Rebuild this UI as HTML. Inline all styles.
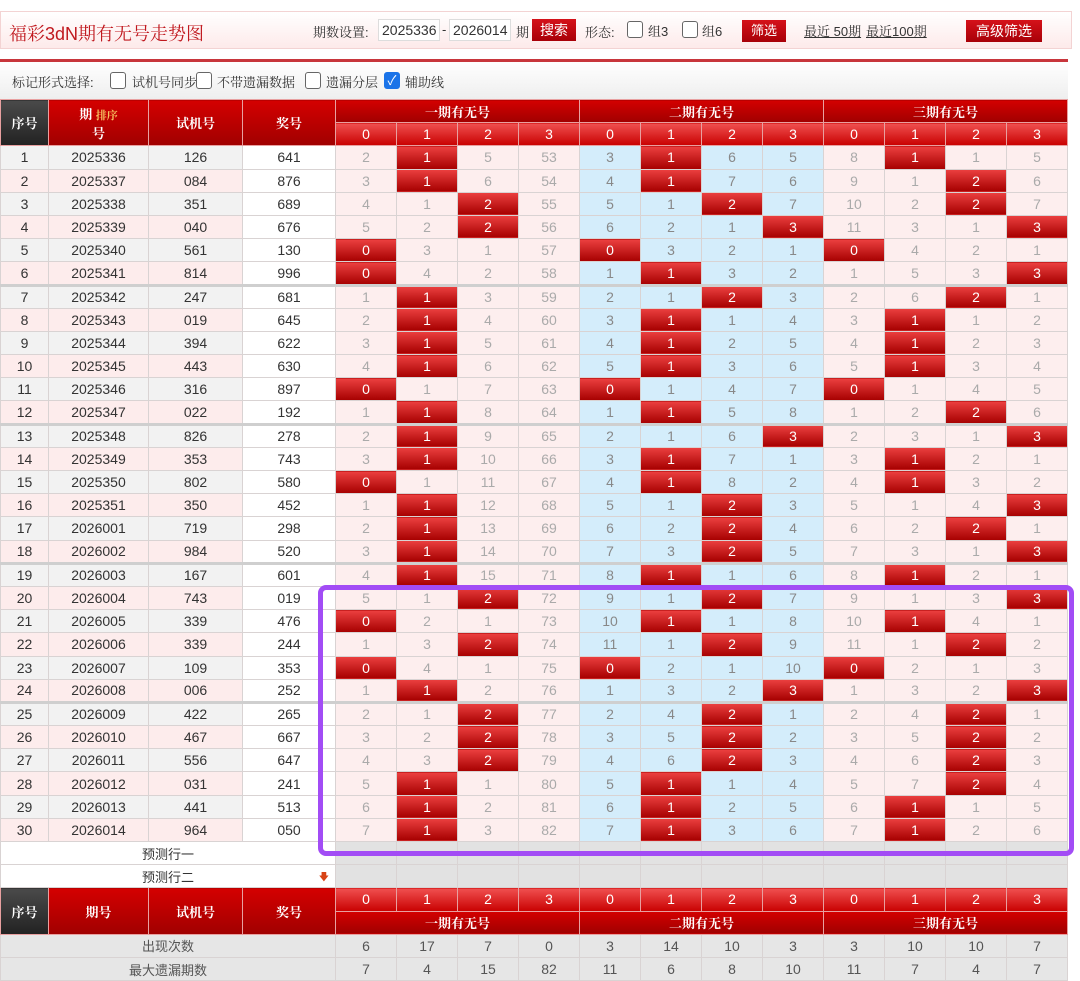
<!DOCTYPE html>
<html><head><meta charset="utf-8">
<style>
*{box-sizing:border-box;margin:0;padding:0}
body{width:1080px;height:970px;overflow:hidden;background:#fff;font-family:"Liberation Sans","Noto Sans CJK SC",sans-serif;position:relative;color:#333}
.top{position:absolute;left:0;top:11px;width:1072px;height:38px;background:linear-gradient(#fff,#fdeaea);border:1px solid #f3d3d3}
.title{position:absolute;left:8px;top:8px;font-size:18px;color:#c0181e;font-family:"Liberation Sans","Noto Serif CJK SC",serif}
.ab{position:absolute;font-size:13px;color:#333;font-family:"Liberation Sans","Noto Serif CJK SC",serif}
.inp{position:absolute;top:7px;height:22px;border:1px solid #ddd;background:#fff;font-size:14px;padding:2px 3px}
.btn{position:absolute;background:linear-gradient(#d5121a,#a80008);color:#fff;font-size:14px;text-align:center;line-height:22px;height:22px}
.cb{position:absolute;width:16px;height:17px;border:1px solid #666;border-radius:3px;background:#fff}
.redline{position:absolute;left:0;top:59px;width:1068px;height:3px;background:#c8363c}
.bar{position:absolute;left:0;top:62px;width:1068px;height:37px;background:linear-gradient(#fff,#eee)}
table{position:absolute;left:0;top:99px;border-collapse:collapse;table-layout:fixed;width:1067px;font-size:14px}
td,th{border:1px solid #d9d3d3;text-align:center;height:23.2px;padding:0;overflow:hidden;white-space:nowrap}
th{color:#fff;font-weight:bold;font-size:13px;background:linear-gradient(#d40000,#a00000);border-color:#e8a0a0;font-family:"Liberation Sans","Noto Serif CJK SC",serif}
th.dk{background:linear-gradient(#4a4a4a,#222)}
th.sub{background:linear-gradient(#f05050,#c80000);font-weight:normal;font-size:14px;font-family:"Liberation Sans",sans-serif}
tr.a td{background:#f2f2f2}
tr.b td{background:#fdecec}
tr.d td:nth-child(4){background:#fff}
tr.d td:nth-child(n+5){background:#fdeeee;color:#aaa}
tr.d td:nth-child(n+9):nth-child(-n+12){background:#d4edfb;color:#888}
tr.d td.h{background:linear-gradient(#ec4040,#a60000)!important;color:#fff!important}
tr.s td{border-top:3px solid #cfcfcf}
table tr.pr td{background:#fff;color:#333}
table tr.pr td.g{background:#e2e2e2}
table tr.ft td{background:#e6e6e6;color:#555}
.purple{position:absolute;left:318px;top:585px;width:756px;height:271px;border:5px solid #a24cf5;border-radius:8px}
</style></head><body>
<div class="top">
<div class="title">福彩3dN期有无号走势图</div>
<div class="ab" style="left:312px;top:10px">期数设置:</div>
<div class="inp" style="left:377px;width:62px">2025336</div>
<div class="ab" style="left:441px;top:10px">-</div>
<div class="inp" style="left:448px;width:62px">2026014</div>
<div class="ab" style="left:515px;top:10px">期</div>
<div class="btn" style="left:531px;top:7px;width:44px">搜索</div>
<div class="ab" style="left:584px;top:10px">形态:</div>
<div class="cb" style="left:626px;top:9px"></div><div class="ab" style="left:647px;top:9px">组3</div>
<div class="cb" style="left:681px;top:9px"></div><div class="ab" style="left:701px;top:9px">组6</div>
<div class="btn" style="left:741px;top:8px;width:44px;font-size:13px">筛选</div>
<div class="ab" style="left:803px;top:9px;text-decoration:underline">最近 50期</div>
<div class="ab" style="left:865px;top:9px;text-decoration:underline">最近100期</div>
<div class="btn" style="left:965px;top:8px;width:76px">高级筛选</div>
</div>
<div class="redline"></div>
<div class="bar">
<div class="ab" style="left:12px;top:10px">标记形式选择:</div>
<div class="cb" style="left:110px;top:10px"></div><div class="ab" style="left:132px;top:10px">试机号同步</div>
<div class="cb" style="left:196px;top:10px"></div><div class="ab" style="left:217px;top:10px">不带遗漏数据</div>
<div class="cb" style="left:305px;top:10px"></div><div class="ab" style="left:326px;top:10px">遗漏分层</div>
<div class="cb" style="left:384px;top:10px;background:#1a73e8;border-color:#1a73e8;color:#fff;font-size:13px;line-height:15px;text-align:center">✓</div><div class="ab" style="left:405px;top:10px">辅助线</div>
</div>
<table>
<colgroup><col style="width:48px"><col style="width:100px"><col style="width:94px"><col style="width:93px"><col span="12" style="width:61px"></colgroup>
<tr><th class="dk" rowspan="2">序号</th><th rowspan="2">期 <span style="color:#f6c060;font-size:11px">排序</span><br>号</th><th rowspan="2">试机号</th><th rowspan="2">奖号</th><th colspan="4">一期有无号</th><th colspan="4">二期有无号</th><th colspan="4">三期有无号</th></tr>
<tr><th class="sub">0</th><th class="sub">1</th><th class="sub">2</th><th class="sub">3</th><th class="sub">0</th><th class="sub">1</th><th class="sub">2</th><th class="sub">3</th><th class="sub">0</th><th class="sub">1</th><th class="sub">2</th><th class="sub">3</th></tr>
<tr class="d a"><td>1</td><td>2025336</td><td>126</td><td>641</td><td>2</td><td class="h">1</td><td>5</td><td>53</td><td>3</td><td class="h">1</td><td>6</td><td>5</td><td>8</td><td class="h">1</td><td>1</td><td>5</td></tr>
<tr class="d b"><td>2</td><td>2025337</td><td>084</td><td>876</td><td>3</td><td class="h">1</td><td>6</td><td>54</td><td>4</td><td class="h">1</td><td>7</td><td>6</td><td>9</td><td>1</td><td class="h">2</td><td>6</td></tr>
<tr class="d a"><td>3</td><td>2025338</td><td>351</td><td>689</td><td>4</td><td>1</td><td class="h">2</td><td>55</td><td>5</td><td>1</td><td class="h">2</td><td>7</td><td>10</td><td>2</td><td class="h">2</td><td>7</td></tr>
<tr class="d b"><td>4</td><td>2025339</td><td>040</td><td>676</td><td>5</td><td>2</td><td class="h">2</td><td>56</td><td>6</td><td>2</td><td>1</td><td class="h">3</td><td>11</td><td>3</td><td>1</td><td class="h">3</td></tr>
<tr class="d a"><td>5</td><td>2025340</td><td>561</td><td>130</td><td class="h">0</td><td>3</td><td>1</td><td>57</td><td class="h">0</td><td>3</td><td>2</td><td>1</td><td class="h">0</td><td>4</td><td>2</td><td>1</td></tr>
<tr class="d b"><td>6</td><td>2025341</td><td>814</td><td>996</td><td class="h">0</td><td>4</td><td>2</td><td>58</td><td>1</td><td class="h">1</td><td>3</td><td>2</td><td>1</td><td>5</td><td>3</td><td class="h">3</td></tr>
<tr class="d a s"><td>7</td><td>2025342</td><td>247</td><td>681</td><td>1</td><td class="h">1</td><td>3</td><td>59</td><td>2</td><td>1</td><td class="h">2</td><td>3</td><td>2</td><td>6</td><td class="h">2</td><td>1</td></tr>
<tr class="d b"><td>8</td><td>2025343</td><td>019</td><td>645</td><td>2</td><td class="h">1</td><td>4</td><td>60</td><td>3</td><td class="h">1</td><td>1</td><td>4</td><td>3</td><td class="h">1</td><td>1</td><td>2</td></tr>
<tr class="d a"><td>9</td><td>2025344</td><td>394</td><td>622</td><td>3</td><td class="h">1</td><td>5</td><td>61</td><td>4</td><td class="h">1</td><td>2</td><td>5</td><td>4</td><td class="h">1</td><td>2</td><td>3</td></tr>
<tr class="d b"><td>10</td><td>2025345</td><td>443</td><td>630</td><td>4</td><td class="h">1</td><td>6</td><td>62</td><td>5</td><td class="h">1</td><td>3</td><td>6</td><td>5</td><td class="h">1</td><td>3</td><td>4</td></tr>
<tr class="d a"><td>11</td><td>2025346</td><td>316</td><td>897</td><td class="h">0</td><td>1</td><td>7</td><td>63</td><td class="h">0</td><td>1</td><td>4</td><td>7</td><td class="h">0</td><td>1</td><td>4</td><td>5</td></tr>
<tr class="d b"><td>12</td><td>2025347</td><td>022</td><td>192</td><td>1</td><td class="h">1</td><td>8</td><td>64</td><td>1</td><td class="h">1</td><td>5</td><td>8</td><td>1</td><td>2</td><td class="h">2</td><td>6</td></tr>
<tr class="d a s"><td>13</td><td>2025348</td><td>826</td><td>278</td><td>2</td><td class="h">1</td><td>9</td><td>65</td><td>2</td><td>1</td><td>6</td><td class="h">3</td><td>2</td><td>3</td><td>1</td><td class="h">3</td></tr>
<tr class="d b"><td>14</td><td>2025349</td><td>353</td><td>743</td><td>3</td><td class="h">1</td><td>10</td><td>66</td><td>3</td><td class="h">1</td><td>7</td><td>1</td><td>3</td><td class="h">1</td><td>2</td><td>1</td></tr>
<tr class="d a"><td>15</td><td>2025350</td><td>802</td><td>580</td><td class="h">0</td><td>1</td><td>11</td><td>67</td><td>4</td><td class="h">1</td><td>8</td><td>2</td><td>4</td><td class="h">1</td><td>3</td><td>2</td></tr>
<tr class="d b"><td>16</td><td>2025351</td><td>350</td><td>452</td><td>1</td><td class="h">1</td><td>12</td><td>68</td><td>5</td><td>1</td><td class="h">2</td><td>3</td><td>5</td><td>1</td><td>4</td><td class="h">3</td></tr>
<tr class="d a"><td>17</td><td>2026001</td><td>719</td><td>298</td><td>2</td><td class="h">1</td><td>13</td><td>69</td><td>6</td><td>2</td><td class="h">2</td><td>4</td><td>6</td><td>2</td><td class="h">2</td><td>1</td></tr>
<tr class="d b"><td>18</td><td>2026002</td><td>984</td><td>520</td><td>3</td><td class="h">1</td><td>14</td><td>70</td><td>7</td><td>3</td><td class="h">2</td><td>5</td><td>7</td><td>3</td><td>1</td><td class="h">3</td></tr>
<tr class="d a s"><td>19</td><td>2026003</td><td>167</td><td>601</td><td>4</td><td class="h">1</td><td>15</td><td>71</td><td>8</td><td class="h">1</td><td>1</td><td>6</td><td>8</td><td class="h">1</td><td>2</td><td>1</td></tr>
<tr class="d b"><td>20</td><td>2026004</td><td>743</td><td>019</td><td>5</td><td>1</td><td class="h">2</td><td>72</td><td>9</td><td>1</td><td class="h">2</td><td>7</td><td>9</td><td>1</td><td>3</td><td class="h">3</td></tr>
<tr class="d a"><td>21</td><td>2026005</td><td>339</td><td>476</td><td class="h">0</td><td>2</td><td>1</td><td>73</td><td>10</td><td class="h">1</td><td>1</td><td>8</td><td>10</td><td class="h">1</td><td>4</td><td>1</td></tr>
<tr class="d b"><td>22</td><td>2026006</td><td>339</td><td>244</td><td>1</td><td>3</td><td class="h">2</td><td>74</td><td>11</td><td>1</td><td class="h">2</td><td>9</td><td>11</td><td>1</td><td class="h">2</td><td>2</td></tr>
<tr class="d a"><td>23</td><td>2026007</td><td>109</td><td>353</td><td class="h">0</td><td>4</td><td>1</td><td>75</td><td class="h">0</td><td>2</td><td>1</td><td>10</td><td class="h">0</td><td>2</td><td>1</td><td>3</td></tr>
<tr class="d b"><td>24</td><td>2026008</td><td>006</td><td>252</td><td>1</td><td class="h">1</td><td>2</td><td>76</td><td>1</td><td>3</td><td>2</td><td class="h">3</td><td>1</td><td>3</td><td>2</td><td class="h">3</td></tr>
<tr class="d a s"><td>25</td><td>2026009</td><td>422</td><td>265</td><td>2</td><td>1</td><td class="h">2</td><td>77</td><td>2</td><td>4</td><td class="h">2</td><td>1</td><td>2</td><td>4</td><td class="h">2</td><td>1</td></tr>
<tr class="d b"><td>26</td><td>2026010</td><td>467</td><td>667</td><td>3</td><td>2</td><td class="h">2</td><td>78</td><td>3</td><td>5</td><td class="h">2</td><td>2</td><td>3</td><td>5</td><td class="h">2</td><td>2</td></tr>
<tr class="d a"><td>27</td><td>2026011</td><td>556</td><td>647</td><td>4</td><td>3</td><td class="h">2</td><td>79</td><td>4</td><td>6</td><td class="h">2</td><td>3</td><td>4</td><td>6</td><td class="h">2</td><td>3</td></tr>
<tr class="d b"><td>28</td><td>2026012</td><td>031</td><td>241</td><td>5</td><td class="h">1</td><td>1</td><td>80</td><td>5</td><td class="h">1</td><td>1</td><td>4</td><td>5</td><td>7</td><td class="h">2</td><td>4</td></tr>
<tr class="d a"><td>29</td><td>2026013</td><td>441</td><td>513</td><td>6</td><td class="h">1</td><td>2</td><td>81</td><td>6</td><td class="h">1</td><td>2</td><td>5</td><td>6</td><td class="h">1</td><td>1</td><td>5</td></tr>
<tr class="d b"><td>30</td><td>2026014</td><td>964</td><td>050</td><td>7</td><td class="h">1</td><td>3</td><td>82</td><td>7</td><td class="h">1</td><td>3</td><td>6</td><td>7</td><td class="h">1</td><td>2</td><td>6</td></tr>
<tr class="pr"><td colspan="4" style="font-size:13px">预测行一</td><td class="g"></td><td class="g"></td><td class="g"></td><td class="g"></td><td class="g"></td><td class="g"></td><td class="g"></td><td class="g"></td><td class="g"></td><td class="g"></td><td class="g"></td><td class="g"></td></tr>
<tr class="pr"><td colspan="4" style="font-size:13px;position:relative">预测行二<span style="position:absolute;right:6px;bottom:0;color:#d84315;font-size:10px">🡇</span></td><td class="g"></td><td class="g"></td><td class="g"></td><td class="g"></td><td class="g"></td><td class="g"></td><td class="g"></td><td class="g"></td><td class="g"></td><td class="g"></td><td class="g"></td><td class="g"></td></tr>
<tr><th class="dk" rowspan="2">序号</th><th rowspan="2">期号</th><th rowspan="2">试机号</th><th rowspan="2">奖号</th><th class="sub">0</th><th class="sub">1</th><th class="sub">2</th><th class="sub">3</th><th class="sub">0</th><th class="sub">1</th><th class="sub">2</th><th class="sub">3</th><th class="sub">0</th><th class="sub">1</th><th class="sub">2</th><th class="sub">3</th></tr>
<tr><th colspan="4">一期有无号</th><th colspan="4">二期有无号</th><th colspan="4">三期有无号</th></tr>
<tr class="ft"><td colspan="4" style="font-size:13px">出现次数</td><td>6</td><td>17</td><td>7</td><td>0</td><td>3</td><td>14</td><td>10</td><td>3</td><td>3</td><td>10</td><td>10</td><td>7</td></tr>
<tr class="ft"><td colspan="4" style="font-size:13px">最大遗漏期数</td><td>7</td><td>4</td><td>15</td><td>82</td><td>11</td><td>6</td><td>8</td><td>10</td><td>11</td><td>7</td><td>4</td><td>7</td></tr>
</table>
<div class="purple"></div>
</body></html>
